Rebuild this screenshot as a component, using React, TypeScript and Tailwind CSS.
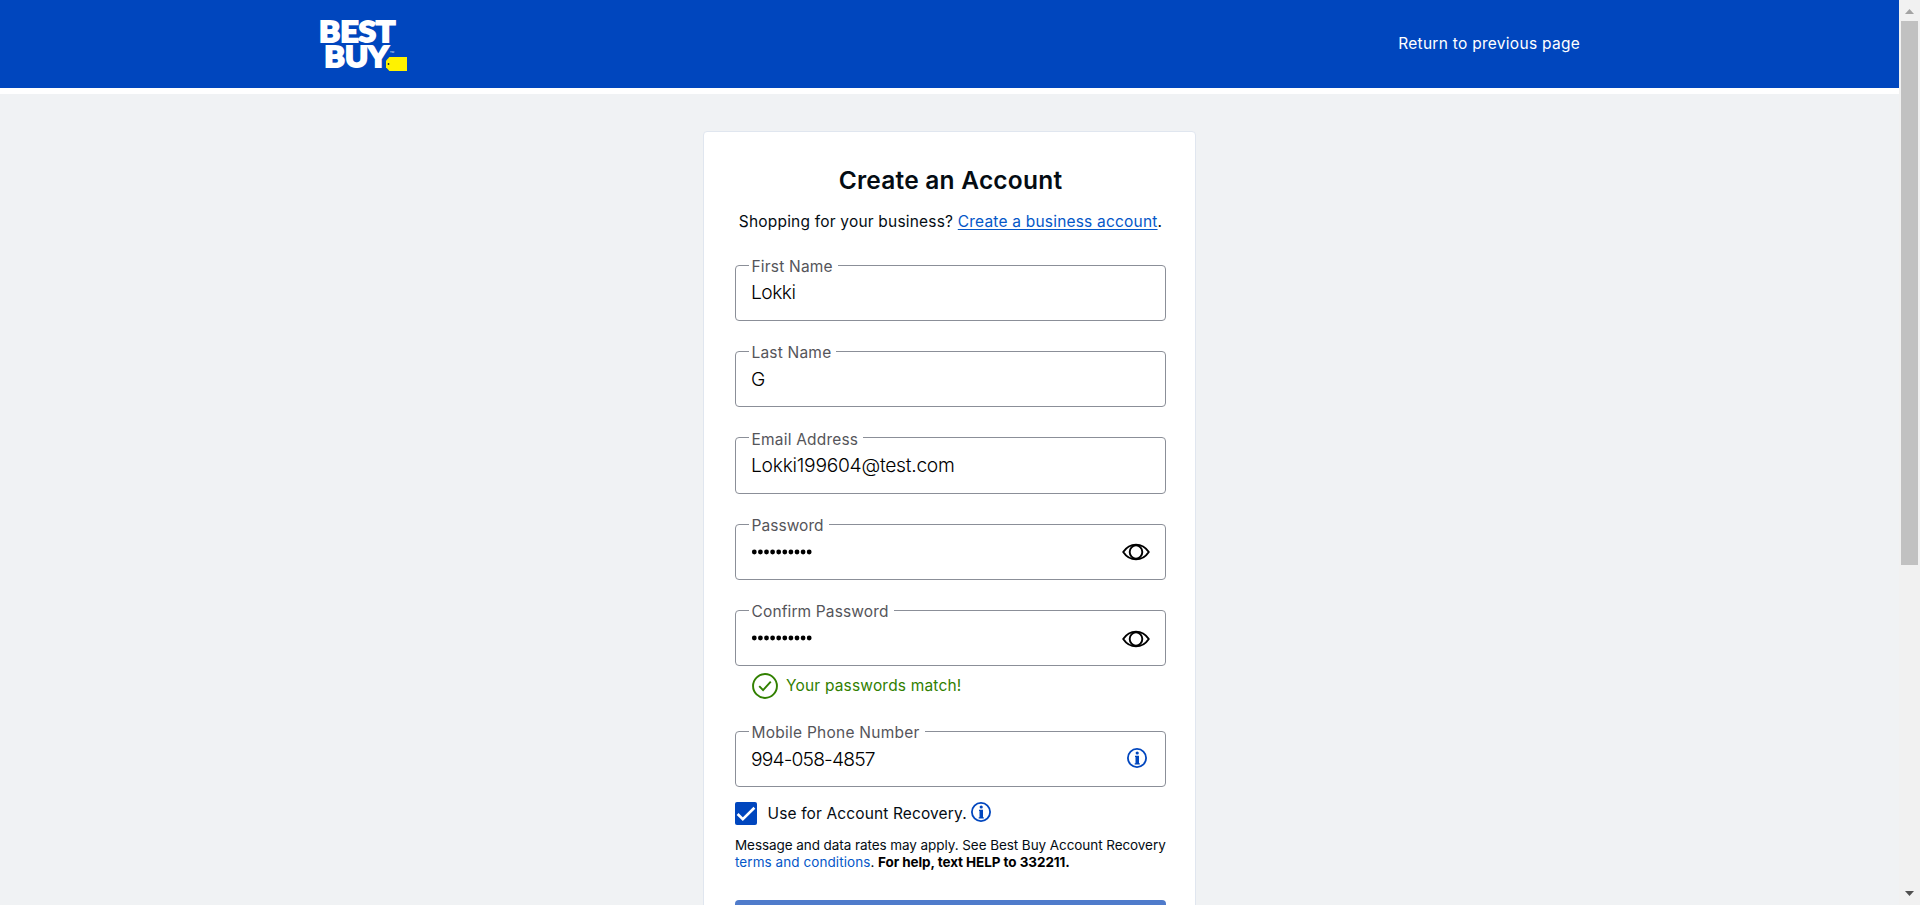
import type { ReactNode } from "react";

function Logo() {
  return (
    <svg width="90" height="56" viewBox="0 0 90 56" className="block overflow-visible" aria-label="Best Buy">
      <g fill="#fff" stroke="#fff" strokeWidth="1.9" fontFamily="Lato, sans-serif" fontWeight="900">
        <text x="0.1" y="26" fontSize="29" textLength="76.3" lengthAdjust="spacingAndGlyphs">BEST</text>
        <text x="5.3" y="50.5" fontSize="28.6" textLength="64.2" lengthAdjust="spacingAndGlyphs">BUY</text>
      </g>
      <text x="71" y="36.5" fontSize="2.6" fill="#fff" fontFamily="Inter, sans-serif">TM</text>
      <path d="M70.4 41H88v14H70.4L67 51.2v-6.4z" fill="#fff200" />
      <circle cx="69.5" cy="48" r="0.9" fill="#1d252c" />
    </svg>
  );
}

function EyeIcon() {
  return (
    <svg width="28" height="18" viewBox="0 0 28 18" fill="none" stroke="#000" strokeWidth="1.9">
      <path d="M1.2 9C4.6 3.9 9 1.6 14 1.6S23.4 3.9 26.8 9C23.4 14.1 19 16.4 14 16.4S4.6 14.1 1.2 9z" strokeLinejoin="round" />
      <ellipse cx="14" cy="9" rx="6.3" ry="6.6" strokeWidth="1.9" />
    </svg>
  );
}

function InfoIcon() {
  return (
    <svg width="20" height="20" viewBox="0 0 20 20" className="block shrink-0">
      <circle cx="10" cy="10" r="9.1" fill="none" stroke="#0046be" strokeWidth="1.8" />
      <circle cx="10.2" cy="5" r="1.6" fill="#0046be" />
      <path d="M8 7.7h4v7.5h.8v1.3H7.7v-1.3h.8V9H8z" fill="#0046be" />
    </svg>
  );
}

function PasswordDots() {
  return (
    <svg width="62" height="24" viewBox="0 0 62 24" className="block">
      {Array.from({ length: 10 }, (_, i) => (
        <circle key={i} cx={3.3 + i * 6.1} cy="12" r="2.4" fill="#000" />
      ))}
    </svg>
  );
}

type FieldProps = {
  label: string;
  labelClass: string;
  boxClass?: string;
  labelTop?: string;
  valueClass?: string;
  children: ReactNode;
  icon?: ReactNode;
};

function Field({ label, labelClass, boxClass = "h-14 pt-[15px]", labelTop = "-top-[9px]", valueClass = "", children, icon }: FieldProps) {
  return (
    <div className={`relative flex rounded-[4px] border border-[#8b8f98] pl-[15px] ${boxClass}`}>
      <span className={`absolute left-[13px] bg-white pl-[2.5px] pr-[5px] text-[15.5px] leading-5 whitespace-nowrap text-[#55555a] ${labelTop} ${labelClass}`}>
        {label}
      </span>
      <div className={`flex-1 text-[19.25px] leading-6 font-light text-black ${valueClass}`}>{children}</div>
      {icon}
    </div>
  );
}

export default function App() {
  return (
    <div className="flex h-[905px] w-[1920px] overflow-hidden bg-[#f0f2f4] font-['Inter',sans-serif] text-[#040c13]">
      <div className="flex h-full w-[1899px] flex-col">
        <header className="flex h-[88px] shrink-0 items-start justify-between bg-[#0046be] pr-[319px] pl-[319px]">
          <div className="pt-4">
            <Logo />
          </div>
          <a className="pt-[34px] text-[15.5px] leading-5 tracking-[0.28px] text-white">Return to previous page</a>
        </header>
        <div className="h-1.5 shrink-0 bg-white" />

        <main className="flex flex-1 justify-center pt-[37px]">
          <section className="h-[900px] w-[493px] shrink-0 rounded-[4px] border border-[#e0e6ef] bg-white pt-[33px] pr-[29px] pl-[31px]">
            <h1 className="text-center text-[24.5px] leading-[30px] font-semibold tracking-[0.22px]">Create an Account</h1>
            <p className="mt-[17px] text-center text-[15.5px] leading-5 tracking-[0.2px] whitespace-nowrap">
              Shopping for your business?{" "}
              <a className="text-[#0457c8] underline underline-offset-2">Create a business account</a>.
            </p>

            <div className="mt-[33px] flex flex-col gap-[30px]">
              <Field label="First Name" labelClass="tracking-[0.2px]" boxClass="h-14 pt-[14px]" valueClass="tracking-[-0.55px]">
                Lokki
              </Field>
              <Field label="Last Name" labelClass="tracking-[0.2px]">G</Field>
              <Field
                label="Email Address"
                labelClass="tracking-[0.2px]"
                labelTop="-top-2"
                boxClass="h-[57px] pt-[15px]"
                valueClass="tracking-[-0.27px]"
              >
                Lokki199604@test.com
              </Field>
              <Field label="Password" labelClass="tracking-[0.05px]" icon={<div className="-mt-px mr-[15px] pt-[4px]"><EyeIcon /></div>}>
                <PasswordDots />
              </Field>
              <Field label="Confirm Password" labelClass="tracking-[0.13px]" icon={<div className="mr-[15px] pt-[4px]"><EyeIcon /></div>}>
                <PasswordDots />
              </Field>
            </div>

            <div className="mt-[7px] flex h-[26px] items-center pl-[17px] text-[#318000]">
              <svg width="26" height="26" viewBox="0 0 27 27" fill="none" stroke="#318000" strokeWidth="2" className="shrink-0">
                <circle cx="13.5" cy="13.5" r="12.4" />
                <path d="M7.5 13.6l4 4.2 8-8.9" />
              </svg>
              <span className="ml-2 text-[15.5px] leading-5 tracking-[0.18px]">Your passwords match!</span>
            </div>

            <div className="mt-8">
              <Field
                label="Mobile Phone Number"
                labelClass="tracking-[0.25px]"
                valueClass="tracking-[-0.85px]"
                icon={<div className="mr-[18px] pt-px"><InfoIcon /></div>}
              >
                994-058-4857
              </Field>
            </div>

            <div className="mt-[15px] flex h-[23px] items-start">
              <span className="flex h-[23px] w-[22px] items-center justify-center rounded-[2px] bg-[#0046be]">
                <svg width="20" height="16" viewBox="0 0 20 16" fill="none" stroke="#fff" strokeWidth="2.6">
                  <path d="M1.6 8l5.2 5.2L18.4 1.8" />
                </svg>
              </span>
              <span className="ml-[10.5px] pt-[2px] text-[15.5px] leading-5 tracking-[0.13px]">Use for Account Recovery.</span>
              <span className="ml-1">
                <InfoIcon />
              </span>
            </div>

            <p className="mt-3 text-[13.5px] leading-[17px] tracking-[-0.07px] whitespace-nowrap">
              Message and data rates may apply. See Best Buy Account Recovery
              <br />
              <a className="tracking-[0.07px] text-[#0457c8]">terms and conditions</a>.{" "}
              <strong className="font-bold tracking-[-0.07px] text-black">For help, text HELP to 332211.</strong>
            </p>

            <button className="mt-[29px] block h-11 w-full rounded-[4px] bg-[#4f7bcb]" aria-label="Create an Account" />
          </section>
        </main>
      </div>

      <div className="flex h-full w-[21px] flex-col items-center bg-[#f1f1f1]">
        <div className="flex h-[21px] shrink-0 items-center pt-0.5">
          <svg width="9" height="5" viewBox="0 0 9 5"><path d="M0 5L4.5 0 9 5z" fill="#a3a3a3" /></svg>
        </div>
        <div className="h-[544px] w-[17px] shrink-0 bg-[#c1c1c1]" />
        <div className="flex-1" />
        <div className="flex h-[21px] shrink-0 items-center pb-0.5">
          <svg width="9" height="5" viewBox="0 0 9 5"><path d="M0 0h9L4.5 5z" fill="#505050" /></svg>
        </div>
      </div>
    </div>
  );
}
